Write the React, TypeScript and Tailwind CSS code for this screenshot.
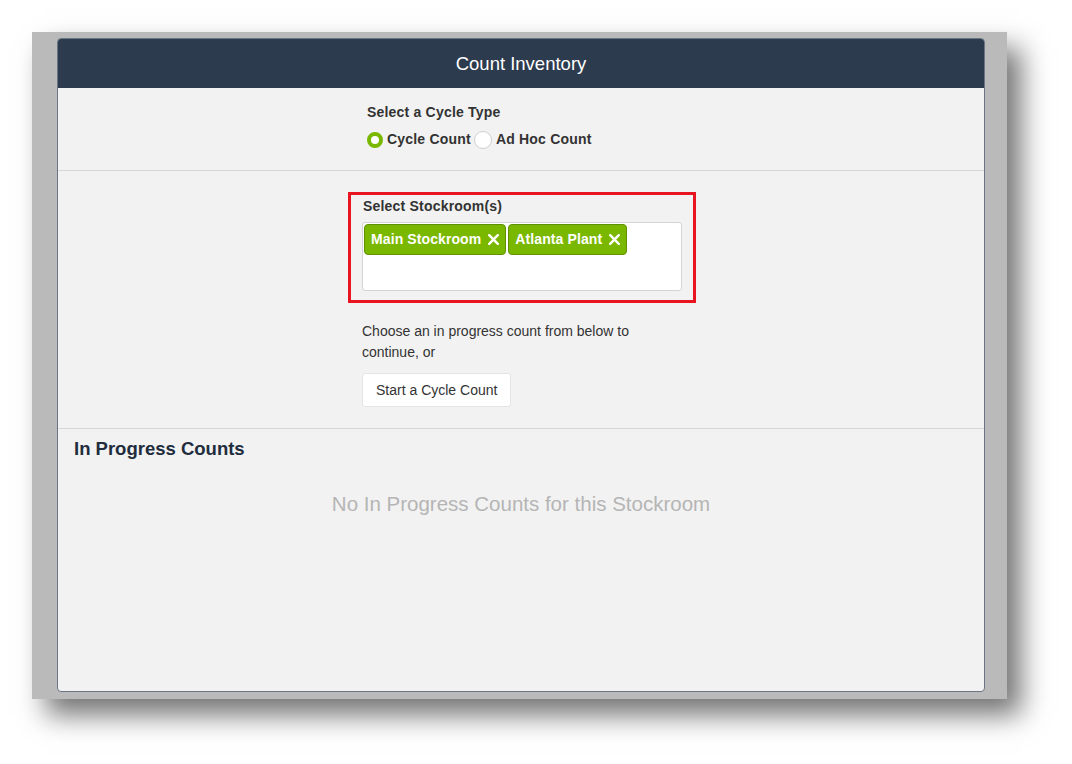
const stockrooms = ["Main Stockroom", "Atlanta Plant"];

function RemoveX() {
  return (
    <svg width="11" height="11" viewBox="0 0 11 11" className="shrink-0">
      <path d="M1.2 1.2L9.8 9.8M9.8 1.2L1.2 9.8" stroke="white" strokeWidth="2.4" strokeLinecap="round" />
    </svg>
  );
}

export default function App() {
  return (
    <div className="min-h-[764px] w-[1072px] bg-white pl-8 pt-8 font-['Liberation_Sans',Arial,sans-serif]">
      {/* grey frame around the dialog */}
      <div className="h-[667px] w-[975px] bg-[#bababa] pb-[7px] pl-[25px] pr-[22px] pt-[6px] shadow-[14px_16px_26px_rgba(0,0,0,0.55)]">
        <div className="flex h-full flex-col overflow-hidden rounded-[4px] border border-[#6a7684] bg-[#f2f2f2]">
          {/* Header */}
          <div className="flex h-[49px] shrink-0 items-center justify-center bg-[#2d3b4e] text-[18.5px] text-white">
            Count Inventory
          </div>

          {/* Cycle type */}
          <div className="h-[83px] border-b border-[#d6d6d6] pl-[309px] pt-[15px] text-[#333]">
            <div className="text-[14px] font-bold leading-[18px] tracking-[0.2px]">Select a Cycle Type</div>
            <div className="mt-[8px] flex items-center text-[14px] font-bold tracking-[0.2px]">
              <span className="mr-[4px] h-[16px] w-[16px] rounded-full border-[4px] border-[#7ab800] bg-white" />
              <span>Cycle Count</span>
              <span className="ml-[3px] mr-[4px] h-[18px] w-[18px] rounded-full border border-[#cfcfcf] bg-white" />
              <span>Ad Hoc Count</span>
            </div>
          </div>

          {/* Stockrooms */}
          <div className="h-[258px] border-b border-[#d6d6d6] pt-[21px]">
            <div className="ml-[290px] w-[348px] border-[3px] border-[#e8141f] px-[11px] pb-[9px] pt-[2px]">
              <div className="pl-[1px] text-[14px] font-bold leading-[18px] tracking-[0.2px] text-[#333]">Select Stockroom(s)</div>
              <div className="mt-[7px] flex h-[69px] items-start gap-[2px] rounded-[3px] border border-[#d4d4d4] bg-white p-[1px]">
                {stockrooms.map((s) => (
                  <span
                    key={s}
                    className="flex h-[31px] items-center gap-[7px] rounded-[4px] border border-[#5e9000] bg-[#7ab800] pl-[6px] pr-[6px] text-[14px] font-bold tracking-[0.1px] text-white"
                  >
                    {s}
                    <RemoveX />
                  </span>
                ))}
              </div>
            </div>
            <div className="ml-[304px] mt-[18px] w-[300px] text-[14px] leading-[21px] text-[#333]">
              Choose an in progress count from below to continue, or
            </div>
            <button className="ml-[304px] mt-[10px] h-[34px] rounded-[3px] border border-[#e4e4e4] bg-white px-[13px] text-[14px] text-[#333]">
              Start a Cycle Count
            </button>
          </div>

          {/* In progress */}
          <div className="px-[16px] pt-[8px]">
            <h2 className="text-[18.5px] font-bold leading-[24px] text-[#1f2d3d]">In Progress Counts</h2>
            <div className="mt-[28px] text-center text-[20.5px] text-[#b5b5b5]">
              No In Progress Counts for this Stockroom
            </div>
          </div>
        </div>
      </div>
    </div>
  );
}
